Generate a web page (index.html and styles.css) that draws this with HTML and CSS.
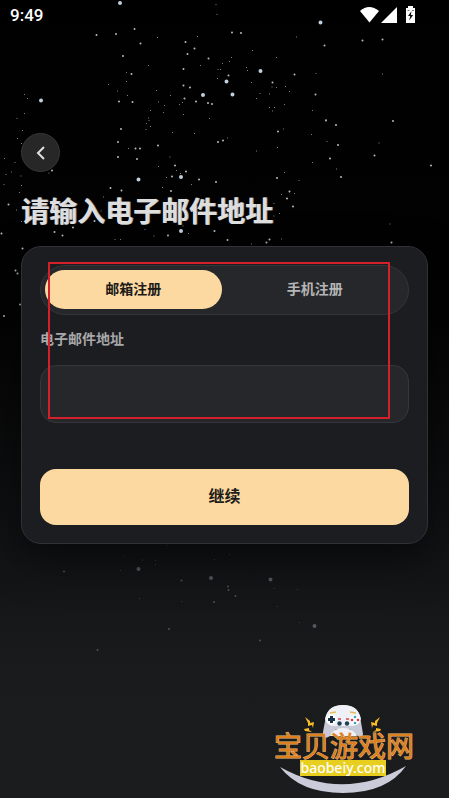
FILE: index.html
```html
<!doctype html>
<html lang="zh-CN">
<head>
	<meta charset="UTF-8">
	<meta name="viewport" content="width=device-width, initial-scale=1">
	<title>邮箱注册</title>
	<link rel="stylesheet" href="styles.css">
</head>
<body>
	<div class="page">
		<!-- 星空 -->
		<svg class="stars" width="449" height="798" viewBox="0 0 449 798" aria-hidden="true">
			<path class="star big" d="M120 3h0M41 100.500h0M203 95h0M320.500 22.500h0M260.500 71h0M226.500 81.500h0M232.500 94.500h0M138.500 179.500h0M181 177h0M181 231h0"/>
			<path class="star mid" d="M96.500 35h0M116 34h0M134.500 29h0M140.500 43.500h0M123 56h0M131.500 74h0M132.500 102h0M119 101.500h0M208.500 58.500h0M212 104h0M190 87.500h0M183.500 69h0M185.500 42h0M194.500 48.500h0M187.500 54h0M196 101.500h0M208 103h0M184.500 98.500h0M183.500 85.500h0M232 32.500h0M241 33h0M324.500 45.500h0M362.500 40.500h0M382.500 39.500h0M294.500 74.500h0M272.500 82.500h0M315.500 94.500h0M228.500 75.500h0"/>
			<path class="star mid" d="M121 129h0M118 142h0M135.500 148.500h0M140 148.500h0M118 157h0M137 159h0M158 145.500h0M175 165.500h0M172 176.500h0M186 171.500h0M199 179.500h0M216 182h0M218 142h0M223 140.500h0M171 191h0M110.500 188h0M121.500 190.500h0M54.500 232h0M1.500 233.500h0M8.500 204.500h0M73 227.500h0M62.500 235.500h0M168 235.500h0M214.500 231h0M52 170.500h0M94.500 221h0M278 131.500h0M326 120.500h0M336 125h0M393 121h0M338 145h0M330 158.500h0M374.500 155.500h0M431 165.500h0M341 177h0M277 178h0M289.500 191.500h0M287 198.500h0M293 206.500h0M269.500 239.500h0M266.500 242.500h0M227.500 240h0M391.500 242.500h0M22.500 248.500h0M15.500 270.500h0M17.500 273.500h0M20 304.500h0M4 316h0"/>
			<path class="star small" d="M157.500 37.500h0M148.500 65.500h0M126.500 72.500h0M126.500 81.500h0M108.500 84.500h0M117.500 91h0M127.500 95.500h0M156.500 90.500h0M170.500 95.500h0M158.500 102h0M164.500 105.500h0M179.500 104.500h0M182.500 102.500h0M24.500 94.500h0M27.500 98.500h0M24.500 113.500h0M17 118.500h0M150.500 110.500h0M148.500 118h0M163.500 112.500h0M183.500 114.500h0M209.500 118.500h0M216 4.500h0M217 14.500h0M197.500 36.500h0M200.500 65.500h0M218 69.500h0M220.500 69.500h0M217.500 78.500h0M222.500 63.500h0M296.500 37h0M252.500 50.500h0M276.500 57.500h0M231.500 57.500h0M229.500 61.500h0M246.500 67.500h0M247.500 70.500h0M316 73.500h0M382.500 74h0M251.500 82.500h0M272 87h0M276.500 87.500h0M285.500 86.500h0M289.500 91.500h0M260 93.500h0M269.500 94h0M256.500 98.500h0M284.500 104.500h0M269.500 107.500h0M274.500 107.500h0M272.500 111h0M312.500 110.500h0M326 119.500h0"/>
			<path class="star small" d="M149 120.500h0M146.500 123.500h0M150.500 126.500h0M146 129.500h0M172.500 132.500h0M194.500 133.500h0M128.500 148.500h0M170 157h0M158.500 166.500h0M176.500 170.500h0M180.500 173.500h0M166.500 177.500h0M191.500 184.500h0M162.500 187.500h0M22.500 130.500h0M17.500 138.500h0M21.500 143.500h0M4.500 158.500h0M15 162.500h0M11.500 172h0M6 174.500h0M21 176h0M4 184.500h0M21.500 185.500h0M19.500 192.500h0M16.500 210h0M103.500 197h0M101 211h0M115 239.500h0M120.500 239.500h0M154 236h0M145 229.500h0M188.500 233.500h0M21.500 221.500h0M49 173h0M183 226h0M227.500 138h0M283.500 129h0M311.500 134.500h0M327 141.500h0M277.500 147.500h0M256.500 151h0M379 143h0M312.500 162.500h0M336.500 169h0M284.500 172.500h0M299 180.500h0M281.500 194.500h0M294.500 193.500h0M274 203.500h0M274 216h0M279.500 213.500h0M390 224h0M251.500 244h0M281.500 239h0"/>
			<path class="star big dim" d="M138.500 569h0M211 578h0M270.500 579.500h0M314.500 626h0"/>
			<path class="star mid dim" d="M64 571.500h0M181.500 580.500h0M228 586.500h0M228.500 590h0M235.500 596h0M214 602h0M169 629h0M97.500 650h0M260 640.500h0"/>
			<path class="star small dim" d="M124.500 556h0M155.500 560.500h0M120.500 570.500h0M142.500 560h0M155.500 564.500h0M167 545.500h0M214.500 559.500h0M229.500 554.500h0M274 588.500h0M297.500 589.500h0M277 606.500h0M299.500 622.500h0M139.500 598.500h0M182 601.500h0"/>
		</svg>

		<header class="status">
			<span class="time">9:49</span>
			<svg class="status-icons" width="56" height="18" viewBox="0 0 56 18" aria-hidden="true">
				<path fill="#fff" d="M0 5Q9-3 19 5L9.500 16.500Z"/>
				<path fill="#fff" d="M37 1V17H21Z"/>
				<path fill="#fff" d="M48 0h5v2h2v15h-9V2h2Z"/>
				<path fill="#111" d="M51.500 5L48 10h2.200l-1 4.500L53.200 9h-2.300Z"/>
				<path stroke="#777" d="M47.500 4.500h2M52 4.500h2"/>
			</svg>
		</header>

		<main class="main">
			<button class="back" type="button" aria-label="返回">
				<svg width="14" height="16" viewBox="0 0 14 16" aria-hidden="true">
					<path d="M10 2L4 8l6 6"/>
				</svg>
			</button>
			<h1 class="title">请输入电子邮件地址</h1>

			<form class="card">
				<div class="tabs">
					<button class="tab active" type="button">邮箱注册</button>
					<button class="tab" type="button">手机注册</button>
				</div>
				<label class="label" for="email">电子邮件地址</label>
				<input class="input" id="email" type="email">
				<button class="submit" type="submit">继续</button>
			</form>
		</main>

		<!-- 红色标注框 -->
		<div class="mark"></div>

		<!-- 站点水印 -->
		<svg class="logo" width="170" height="103" viewBox="0 0 170 103">
			<path fill="#cbccda" d="M20 72Q83 107 146 71Q127 98 83 98Q40 98 20 72Z"/>
			<path fill="#c9cad8" d="M66 21Q69 10 83 10Q97 10 100 21L103 39Q102 45 95 39L90 34H76L70 41Q63 46 63 37Z"/>
			<path fill="#f0f1f6" d="M65 24Q68 10 83 10Q98 10 101 24Q98 32 90 31H76Q67 32 65 24Z"/>
			<path fill="#f0f1f6" d="M70 41Q73 33 83 33Q93 33 97 41Z"/>
			<path stroke="#e8bd55" stroke-width="1.500" fill="none" d="M70 18l6-1M90 17l6 1"/>
			<circle cx="71.500" cy="24.500" r="5" fill="#fff"/>
			<path stroke="#193447" stroke-width="3" d="M71.500 21v7M68 24.500h7"/>
			<circle cx="95" cy="25" r="5" fill="#fff"/>
			<circle cx="95" cy="22" r="1.300" fill="#3aa3c2"/>
			<circle cx="92" cy="25" r="1.300" fill="#dd3447"/>
			<circle cx="98" cy="25" r="1.300" fill="#dd3447"/>
			<circle cx="95" cy="28" r="1.300" fill="#3aa3c2"/>
			<path stroke="#d34352" stroke-width="1.500" d="M78 24h3M86 24h3"/>
			<circle cx="79.500" cy="28.500" r="2.200" fill="#234154"/>
			<circle cx="87" cy="28.500" r="2.200" fill="#234154"/>
			<path fill="#f6bc24" d="M45 22l5 4v2l4-1-1 6-1-3-4 1v-3ZM44 34l5-1v2l3 2-7-1Z"/>
			<path fill="#f6bc24" d="M120 22l-5 4v2l-4-1 1 6 1-3 4 1v-3ZM121 34l-5-1v2l-3 2 7-1Z"/>
			<text class="logo-name" x="84" y="62">宝贝游戏网</text>
			<path fill="#e8ce1e" d="M40 65h86v16H40Z"/>
			<text class="logo-url" x="83" y="78">baobeiy.com</text>
		</svg>
	</div>
</body>
</html>
```

FILE: styles.css
```css
*{
	box-sizing: border-box;
}
body{
	margin: 0;
	background: #000;
	font-family: "Noto Sans CJK SC", sans-serif;
}
button,input{
	margin: 0;
	padding: 0;
	font-family: inherit;
}
button{
	cursor: pointer;
}
.page{
	position: relative;
	min-height: 100vh;
	overflow: hidden;
	background: linear-gradient(#000 0%, #030303 40%, #111214 68%, #1a1b1d 84%, #1b1c1e 100%);
}
.stars{
	position: absolute;
	top: 0;
	left: 0;
}
.star{
	fill: none;
	stroke-linecap: round;
}
.big{
	stroke: #c0d0de;
	stroke-width: 4px;
}
.mid{
	stroke: #b4babf;
	stroke-width: 2px;
}
.small{
	stroke: #9ba1a7;
	stroke-width: 1px;
}
.dim{
	opacity: .35;
}

/* 状态栏 */
.status{
	position: relative;
	display: flex;
	align-items: center;
	justify-content: space-between;
	height: 32px;
	padding: 0 33px 2px 10px;
}
.time{
	color: #fff;
	font: 500 17px/24px Roboto, sans-serif;
}

.main{
	position: relative;
	padding: 101px 21px 40px;
}
.back{
	display: flex;
	align-items: center;
	justify-content: center;
	width: 39px;
	height: 39px;
	border: 1px solid #373737;
	border-radius: 50%;
	background: #272727;
}
.back path{
	fill: none;
	stroke: #e0e0e0;
	stroke-width: 2px;
}
.title{
	margin: 18px 0 16px;
	color: #dedede;
	font-size: 28px;
	line-height: 40px;
	font-weight: 700;
	text-shadow: 1px 0 #a0a0a0;
}

/* 注册卡片 */
.card{
	display: flex;
	flex-direction: column;
	padding: 18px;
	border: 1px solid #313235;
	border-radius: 20px;
	background: #1c1d20;
	box-shadow: 0 16px 40px rgba(0,0,0,.5);
}
.tabs{
	display: flex;
	gap: 5px;
	height: 50px;
	padding: 4px 5px 5px 4px;
	border: 1px solid #343538;
	border-radius: 25px;
	background: #26272a;
}
.tab{
	flex: 1;
	padding-bottom: 3px;
	border: 0;
	border-radius: 20px;
	background: none;
	color: #b5b5b6;
	font-size: 14px;
	font-weight: 700;
}
.active{
	background: #fdd9a2;
	color: #1c1b18;
}
.label{
	margin: 13px 0 17px;
	color: #a8a8a9;
	font-size: 14px;
	line-height: 20px;
	font-weight: 700;
}
.input{
	width: 100%;
	height: 58px;
	padding: 0 16px;
	border: 1px solid #36373a;
	border-radius: 16px;
	outline: none;
	background: #26272a;
	color: #dedede;
	font-size: 16px;
}
.submit{
	height: 56px;
	margin-top: 46px;
	padding-bottom: 4px;
	border: 0;
	border-radius: 16px;
	background: #fdd9a2;
	color: #1c1b18;
	font-size: 16px;
	font-weight: 700;
}

.mark{
	position: absolute;
	top: 262px;
	left: 48px;
	right: 59px;
	height: 157px;
	border: 2px solid #d3202a;
	pointer-events: none;
}
.logo{
	position: absolute;
	right: 19px;
	bottom: 0;
}
.logo text{
	text-anchor: middle;
}
.logo-name{
	fill: #dc811e;
	stroke: #efb878;
	stroke-width: 1px;
	paint-order: stroke;
	font-size: 28px;
	font-weight: 400;
}
.logo-url{
	fill: #fff;
	font: 500 14px "Noto Sans", sans-serif;
}
```
